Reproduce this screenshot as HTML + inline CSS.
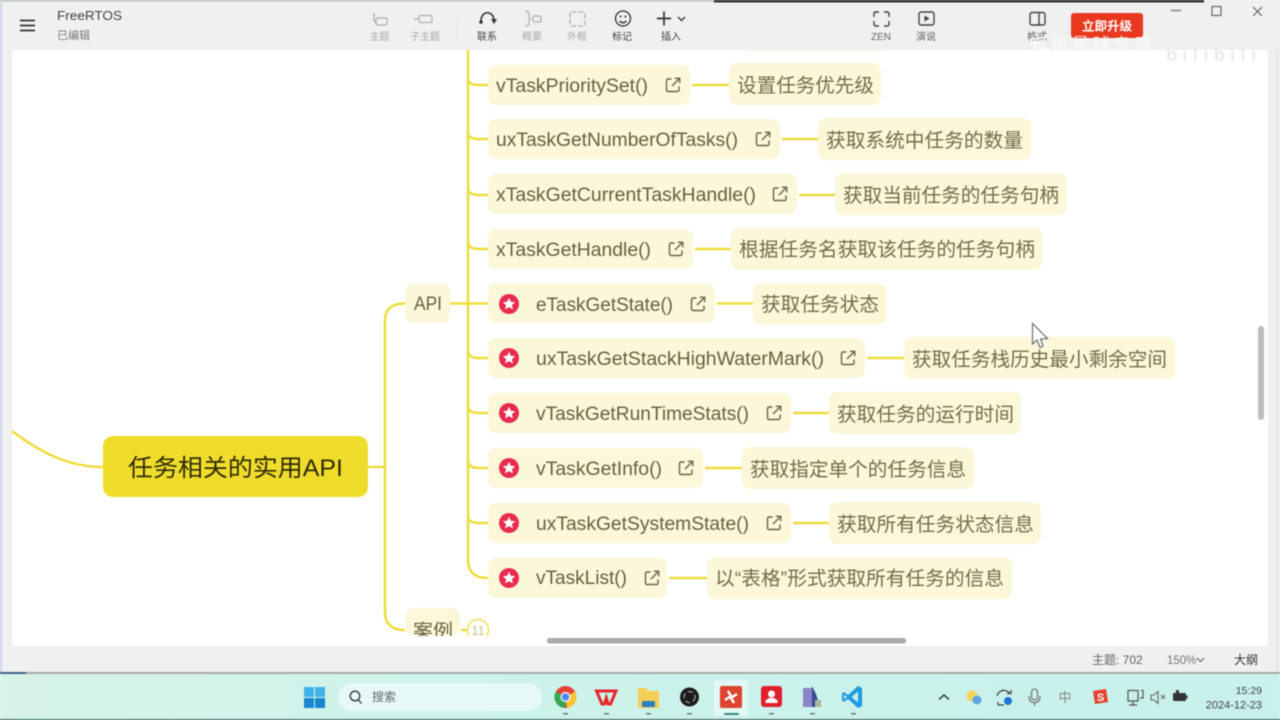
<!DOCTYPE html>
<html><head><meta charset="utf-8"><style>
html,body{margin:0;padding:0;width:1280px;height:720px;overflow:hidden;background:#f0f0f1}
svg{display:block;filter:blur(.45px)}
text{font-family:"Liberation Sans","Noto Sans CJK SC",sans-serif}
.n{font-size:19px;fill:#66623f}
.d{font-size:19.5px;fill:#726e4a}
.b{fill:#fbf7d9}
.c{fill:none;stroke:#eedd3c;stroke-width:2.5}
.l{font-size:10px;fill:#aaa;text-anchor:middle}
.e{font-size:10px;fill:#444;text-anchor:middle}
.t{fill:none;stroke:#b0b0b0;stroke-width:1.3}
.k{fill:none;stroke:#333;stroke-width:1.6}
.y{fill:none;stroke:#555;stroke-width:1.3}
</style></head><body>
<svg width="1280" height="720" viewBox="0 0 1280 720" xmlns="http://www.w3.org/2000/svg">
<defs>
<g id="lk"><path d="M6.500 2H3a1.500 1.500 0 0 0-1.500 1.500v9.500A1.500 1.500 0 0 0 3 14.500h9.500A1.500 1.500 0 0 0 14 13V9.500" fill="none" stroke="#66644c" stroke-width="1.400"/><path d="M7 9L14.200 1.800M9.800 1.300H14.700V6.200" fill="none" stroke="#66644c" stroke-width="1.400"/></g>
<g id="st"><circle r="10" fill="#e82b50"/><path d="M0-6.200L1.800-2.200L6.200-1.800L2.900 1.100L3.900 5.400L0 3.100L-3.900 5.400L-2.900 1.100L-6.200-1.800L-1.800-2.200Z" fill="#fff"/></g>
<linearGradient id="tb" x1="0" x2="1"><stop offset="0" stop-color="#d8f3e8"/><stop offset=".35" stop-color="#cdf3ea"/><stop offset="1" stop-color="#c8f1ec"/></linearGradient>
</defs>

<!-- window -->
<rect width="1280" height="720" fill="#f0f0f1"/>
<rect x="0" y="0" width="714" height="1.500" fill="#b9bcbc"/>
<rect x="714" y="0" width="490" height="2.500" fill="#2f2f33"/>
<rect x="0" y="2" width="2" height="670" fill="#c9d6ea"/>
<rect x="12" y="50" width="1256" height="596" fill="#fff"/>

<!-- connectors -->
<g class="c">
<path d="M468 50V554"/>
<path d="M468 78Q468 85 478 85H488M468 132Q468 139 478 139H488M468 187Q468 195 478 195H488M468 241Q468 249 478 249H488M450 303.500H488M468 350Q468 358 478 358H488M468 405Q468 413 478 413H488M468 460Q468 468 478 468H488M468 515Q468 523 478 523H488M468 554V560Q468 578 488 578"/>
<path d="M405 303.500Q385 303.500 385 320V612Q385 630 405 630"/>
<path d="M368 467H385"/>
<path d="M12 431C40 452 68 467 103 467"/>
<path d="M692 85H729M782 139H818M799 195H835M695 249H731M717 303.500H753M867 358H904M793 413H829M705 468H742M793 523H829M669 578H707"/>
</g>

<!-- top clipped node -->
<rect x="748" y="50" width="134" height="2" fill="#fdf9e5"/>

<!-- nodes -->
<g class="b">
<rect x="488" y="65" width="202" height="40" rx="8"/><rect x="729" y="63" width="152" height="42" rx="8"/>
<rect x="488" y="119" width="292" height="40" rx="8"/><rect x="818" y="118" width="213" height="42" rx="8"/>
<rect x="488" y="174" width="309" height="40" rx="8"/><rect x="835" y="173" width="232" height="42" rx="8"/>
<rect x="488" y="229" width="205" height="40" rx="8"/><rect x="731" y="228" width="311" height="42" rx="8"/>
<rect x="488" y="283" width="227" height="40" rx="8"/><rect x="753" y="283" width="133" height="42" rx="8"/>
<rect x="488" y="338" width="377" height="40" rx="8"/><rect x="904" y="337" width="271" height="42" rx="8"/>
<rect x="488" y="393" width="303" height="40" rx="8"/><rect x="829" y="392" width="192" height="42" rx="8"/>
<rect x="488" y="448" width="215" height="40" rx="8"/><rect x="742" y="447" width="232" height="42" rx="8"/>
<rect x="488" y="503" width="303" height="40" rx="8"/><rect x="829" y="502" width="212" height="42" rx="8"/>
<rect x="488" y="558" width="179" height="40" rx="8"/><rect x="707" y="557" width="305" height="42" rx="8"/>
<rect x="405" y="284" width="45" height="39" rx="8"/>
<rect x="406" y="608" width="54" height="28" rx="8"/>
</g>

<!-- node text -->
<text class="n" x="496" y="92" textLength="152" lengthAdjust="spacingAndGlyphs">vTaskPrioritySet()</text>
<text class="n" x="496" y="146" textLength="242" lengthAdjust="spacingAndGlyphs">uxTaskGetNumberOfTasks()</text>
<text class="n" x="496" y="201" textLength="260" lengthAdjust="spacingAndGlyphs">xTaskGetCurrentTaskHandle()</text>
<text class="n" x="496" y="256" textLength="155" lengthAdjust="spacingAndGlyphs">xTaskGetHandle()</text>
<text class="n" x="536" y="311" textLength="137" lengthAdjust="spacingAndGlyphs">eTaskGetState()</text>
<text class="n" x="536" y="365" textLength="288" lengthAdjust="spacingAndGlyphs">uxTaskGetStackHighWaterMark()</text>
<text class="n" x="536" y="420" textLength="213" lengthAdjust="spacingAndGlyphs">vTaskGetRunTimeStats()</text>
<text class="n" x="536" y="475" textLength="126" lengthAdjust="spacingAndGlyphs">vTaskGetInfo()</text>
<text class="n" x="536" y="530" textLength="213" lengthAdjust="spacingAndGlyphs">uxTaskGetSystemState()</text>
<text class="n" x="536" y="584" textLength="91" lengthAdjust="spacingAndGlyphs">vTaskList()</text>
<text class="n" x="414" y="310" textLength="28" lengthAdjust="spacingAndGlyphs">API</text>

<text class="d" x="737" y="92" textLength="137" lengthAdjust="spacingAndGlyphs">设置任务优先级</text>
<text class="d" x="826" y="147" textLength="197" lengthAdjust="spacingAndGlyphs">获取系统中任务的数量</text>
<text class="d" x="843" y="202" textLength="216" lengthAdjust="spacingAndGlyphs">获取当前任务的任务句柄</text>
<text class="d" x="739" y="256" textLength="296" lengthAdjust="spacingAndGlyphs">根据任务名获取该任务的任务句柄</text>
<text class="d" x="761" y="311" textLength="118" lengthAdjust="spacingAndGlyphs">获取任务状态</text>
<text class="d" x="912" y="366" textLength="255" lengthAdjust="spacingAndGlyphs">获取任务栈历史最小剩余空间</text>
<text class="d" x="837" y="421" textLength="177" lengthAdjust="spacingAndGlyphs">获取任务的运行时间</text>
<text class="d" x="750" y="476" textLength="216" lengthAdjust="spacingAndGlyphs">获取指定单个的任务信息</text>
<text class="d" x="837" y="531" textLength="197" lengthAdjust="spacingAndGlyphs">获取所有任务状态信息</text>
<text class="d" x="715" y="585" textLength="289" lengthAdjust="spacingAndGlyphs">以“表格”形式获取所有任务的信息</text>

<use href="#lk" x="665" y="77"/><use href="#lk" x="755" y="131"/><use href="#lk" x="772" y="186"/><use href="#lk" x="668" y="241"/><use href="#lk" x="690" y="296"/><use href="#lk" x="840" y="350"/><use href="#lk" x="766" y="405"/><use href="#lk" x="678" y="460"/><use href="#lk" x="766" y="515"/><use href="#lk" x="644" y="570"/>
<use href="#st" x="509" y="304"/><use href="#st" x="509" y="358"/><use href="#st" x="509" y="413"/><use href="#st" x="509" y="468"/><use href="#st" x="509" y="523"/><use href="#st" x="509" y="578"/>

<!-- central -->
<rect x="103" y="436" width="265" height="61" rx="10" fill="#efdc2b"/>
<text x="128" y="476" font-size="24" fill="#2e2a08" textLength="215" lengthAdjust="spacingAndGlyphs">任务相关的实用API</text>

<!-- 案例 -->
<text x="413" y="637" font-size="18" fill="#66623f" textLength="40" lengthAdjust="spacingAndGlyphs">案例</text>
<path d="M461 630H467" class="c"/>
<circle cx="478" cy="630" r="10.500" fill="#fff" stroke="#eedd3c" stroke-width="1.300"/>
<text x="478" y="635" font-size="13" fill="#c9c48a" text-anchor="middle">11</text>
<rect x="12" y="636" width="1256" height="10" fill="#fff"/>

<!-- scrollbars -->
<rect x="547" y="638" width="359" height="5.500" rx="2.500" fill="#a9a9a9"/>
<rect x="1258" y="326" width="6" height="94" rx="3" fill="#bcbcbc"/>

<!-- cursor -->
<path d="M1032.500 323.500V344L1037 340L1040 347.500L1043 346L1040.500 339L1047.500 338.500Z" fill="#fff" stroke="#6d6d78" stroke-width="1.200"/>

<!-- top bar -->
<path d="M20 20.500H35M20 25.500H35M20 30.500H35" stroke="#333" stroke-width="1.800"/>
<text x="57" y="20" font-size="13" fill="#444" textLength="65" lengthAdjust="spacingAndGlyphs">FreeRTOS</text>
<text x="57" y="39" font-size="11" fill="#777">已编辑</text>

<path d="M374 14V20Q374 22 376 22M373 14h2" class="t"/><rect x="376" y="18" width="11" height="7" rx="1.500" class="t"/>
<path d="M414 19h4" class="t"/><rect x="419" y="15.500" width="13" height="7" rx="1.500" class="t"/>
<path d="M481 21C481 10 494 10 494 21" class="k"/><path d="M491 19L494 24L497 19Z" fill="#333"/><circle cx="481" cy="22" r="1.800" fill="#333"/>
<path d="M525 11Q529 11 529 15V17Q529 19 531 19Q529 19 529 21V23Q529 26 525 26" class="t"/><rect x="533" y="16" width="8" height="6" rx="1.500" class="t"/>
<rect x="570" y="12" width="15" height="14" rx="1.500" class="t" stroke-dasharray="5 2"/>
<circle cx="623" cy="18.500" r="7.500" class="y" style="stroke:#333"/><circle cx="620.500" cy="16.500" r="1" fill="#333"/><circle cx="625.500" cy="16.500" r="1" fill="#333"/><path d="M619.500 21Q623 24.500 626.500 21" class="y" style="stroke:#333"/>
<path d="M657 18.500H671M664 11.500V25.500" stroke="#333" stroke-width="1.700"/><path d="M678 17L681.500 20.500L685 17" class="y" style="stroke:#333"/>
<path d="M457 20V38" stroke="#e2e2e2"/>
<text class="l" x="379.500" y="40">主题</text><text class="l" x="425" y="40">子主题</text><text class="e" x="487" y="40">联系</text><text class="l" x="532" y="40">概要</text><text class="l" x="577" y="40">外框</text><text class="e" x="622" y="40">标记</text><text class="e" x="671" y="40">插入</text>

<path d="M874 17v-3q0-2 2-2h3M884 12h3q2 0 2 2v3M889 21v3q0 2-2 2h-3M879 26h-3q-2 0-2-2v-3" class="k" style="stroke-width:1.400;stroke:#444"/>
<rect x="919" y="12" width="15" height="13" rx="2" class="k" style="stroke-width:1.400;stroke:#444"/><path d="M924.500 15.500V21.500L929.500 18.500Z" fill="#444"/>
<rect x="1030" y="12.500" width="15" height="12.500" rx="2" class="k" style="stroke-width:1.400;stroke:#444"/><path d="M1039 12.500V25" stroke="#444" stroke-width="1.400"/>
<text class="e" x="881" y="40" style="fill:#666">ZEN</text><text class="e" x="926" y="40" style="fill:#666">演说</text><text class="e" x="1037" y="40" style="fill:#666">格式</text>

<rect x="1071" y="13" width="72" height="25" rx="3" fill="#e8381f"/>
<text x="1107" y="30.500" font-size="12.500" font-weight="700" fill="#fff" text-anchor="middle">立即升级</text>
<text x="1030" y="50" font-size="17" fill="#fff" opacity=".85" textLength="122" lengthAdjust="spacing">知识星球专享</text>
<text x="1166" y="61" font-size="18" font-weight="700" fill="#ececec" textLength="90" lengthAdjust="spacing">bilibili</text>

<path d="M1171 10.500H1181" stroke="#777" stroke-width="1.300"/>
<rect x="1212" y="6.500" width="9" height="9" fill="none" stroke="#666" stroke-width="1.200"/>
<path d="M1253 7L1262 16M1262 7L1253 16" stroke="#666" stroke-width="1.200"/>

<!-- status -->
<text x="1092" y="664" font-size="12" fill="#666">主题: 702</text>
<text x="1167" y="664" font-size="11.500" fill="#777">150%</text><path d="M1197 658L1200.500 661.500L1204 658" class="t" style="stroke:#777"/>
<text x="1234" y="664" font-size="12" fill="#333">大纲</text>

<!-- window bottom -->
<rect x="0" y="672" width="1280" height="2" fill="#a8a8a8"/>
<rect x="0" y="672" width="26" height="2" fill="#41608f"/>
<rect x="1276" y="50" width="2" height="622" fill="#e6e6e6"/>

<!-- taskbar -->
<rect x="0" y="674" width="1280" height="46" fill="url(#tb)"/>
<rect x="0" y="719" width="1280" height="1" fill="#2c5a50"/>
<g fill="#1f8fd6"><rect x="304" y="687" width="10" height="10" fill="#3fb3e8"/><rect x="315" y="687" width="10" height="10" fill="#3fb3e8"/><rect x="304" y="698" width="10" height="10" fill="#1686cf"/><rect x="315" y="698" width="10" height="10" fill="#1686cf"/></g>
<rect x="338" y="683" width="204" height="28" rx="14" fill="#e6f9f6"/>
<circle cx="355" cy="696" r="4.800" fill="none" stroke="#333" stroke-width="1.300"/><path d="M358.500 700L361.500 703.500" stroke="#333" stroke-width="1.300"/>
<text x="372" y="701" font-size="12" fill="#666">搜索</text>

<!-- chrome -->
<circle cx="565.500" cy="697" r="11" fill="#e84235"/><path d="M565.500 697L556 702.500A11 11 0 0 0 565.500 708Z" fill="#34a853"/><path d="M556 702.500A11 11 0 0 1 556 691.500L565.500 697Z" fill="#34a853"/><path d="M565.500 697L575 691.500A11 11 0 0 1 567 708Z" fill="#f7c531"/><circle cx="565.500" cy="697" r="5" fill="#fff"/><circle cx="565.500" cy="697" r="3.800" fill="#4a8af4"/>
<!-- wps -->
<path d="M596.500 691H616L610.500 704H608L606.300 698L604.500 704H602Z" fill="none" stroke="#e8262d" stroke-width="3"/>
<!-- folder -->
<path d="M638 688H646L648 691H659V708H638Z" fill="#f5cf55"/><rect x="642" y="701" width="13" height="6" rx="1" fill="#2a7fc1"/>
<!-- obs -->
<circle cx="689.500" cy="697" r="9.500" fill="#1c1c1c"/><circle cx="689.500" cy="697" r="5.500" fill="none" stroke="#bbb" stroke-width="1" stroke-dasharray="5 3"/>
<!-- active -->
<rect x="714" y="680" width="34" height="36" rx="3" fill="#e2f8f4"/>
<rect x="720" y="686" width="22" height="22" rx="2" fill="#dd4430"/><path d="M725 700L731 696L728 691M737 694L731 698L734 703" stroke="#fff" stroke-width="2.500" fill="none"/>
<rect x="724" y="713" width="15" height="2" rx="1" fill="#2f8a80"/>
<!-- red app -->
<rect x="761" y="686" width="21" height="21" rx="3" fill="#e0202f"/><circle cx="771.500" cy="694" r="3.500" fill="#fff"/><path d="M765.500 703V700.500L769 698H774L777.500 700.500V703Z" fill="#fff"/>
<!-- building -->
<path d="M803 688H812V707H803Z" fill="#8a84c8"/><path d="M812 686L816 694L820 707H812Z" fill="#3b4a92"/><rect x="815" y="700" width="6" height="7" fill="#a9b69a"/>
<!-- vscode -->
<path d="M858 686L862 688V706L858 708L848 699L844 702L842 700.500V693.500L844 692L848 695Z" fill="#1f9be0"/><path d="M858 691.500L851.500 697L858 702.500Z" fill="#c8f1ec"/><path d="M844 694.500L847 697L844 699.500Z" fill="#c8f1ec"/>
<!-- dots -->
<g fill="#777"><rect x="563" y="713" width="5" height="1.500"/><rect x="604" y="713" width="5" height="1.500"/><rect x="646" y="713" width="5" height="1.500"/><rect x="687" y="713" width="5" height="1.500"/><rect x="769" y="713" width="5" height="1.500"/><rect x="810" y="713" width="5" height="1.500"/><rect x="851" y="713" width="5" height="1.500"/></g>

<!-- tray -->
<path d="M939 699.500L944 695L949 699.500" fill="none" stroke="#333" stroke-width="1.500"/>
<circle cx="972" cy="696" r="5.500" fill="#f4d35a"/><circle cx="977" cy="700" r="4.500" fill="#5aa5e6"/>
<path d="M997 696A7 7 0 0 1 1010 694M1007 693.500H1011V690M1004 705H998M998 705V702" fill="none" stroke="#444" stroke-width="1.300"/><circle cx="1008" cy="701" r="4" fill="#1e74d0"/>
<rect x="1031.500" y="689" width="6" height="11" rx="3" fill="none" stroke="#777" stroke-width="1.300"/><path d="M1029 696Q1029 702.500 1034.500 702.500Q1040 702.500 1040 696M1034.500 702.500V706" fill="none" stroke="#777" stroke-width="1.300"/>
<text x="1065" y="702" font-size="13" fill="#888" text-anchor="middle">中</text>
<path d="M1093 691L1106 689L1108 702L1095 704Z" fill="#e8412f"/><text x="1100.500" y="701" font-size="11" font-weight="700" fill="#fff" text-anchor="middle">S</text>
<path d="M1128 690.500H1138V701H1128ZM1141 690.500H1143V698H1140M1133 701V705M1129 705H1137" fill="none" stroke="#555" stroke-width="1.200"/>
<path d="M1151 695H1154L1158 691.500V703.500L1154 700H1151Z" fill="none" stroke="#666" stroke-width="1.100"/><path d="M1161 695L1165 699M1165 695L1161 699" stroke="#666"/>
<rect x="1173" y="693" width="13" height="8" rx="1" fill="#333"/><rect x="1176" y="690" width="3" height="3" fill="#333"/><rect x="1186" y="695.500" width="1.500" height="3" fill="#333"/>
<text x="1262" y="694" font-size="10.500" fill="#444" text-anchor="end">15:29</text>
<text x="1262" y="708.500" font-size="11" fill="#444" text-anchor="end">2024-12-23</text>
</svg>
</body></html>
